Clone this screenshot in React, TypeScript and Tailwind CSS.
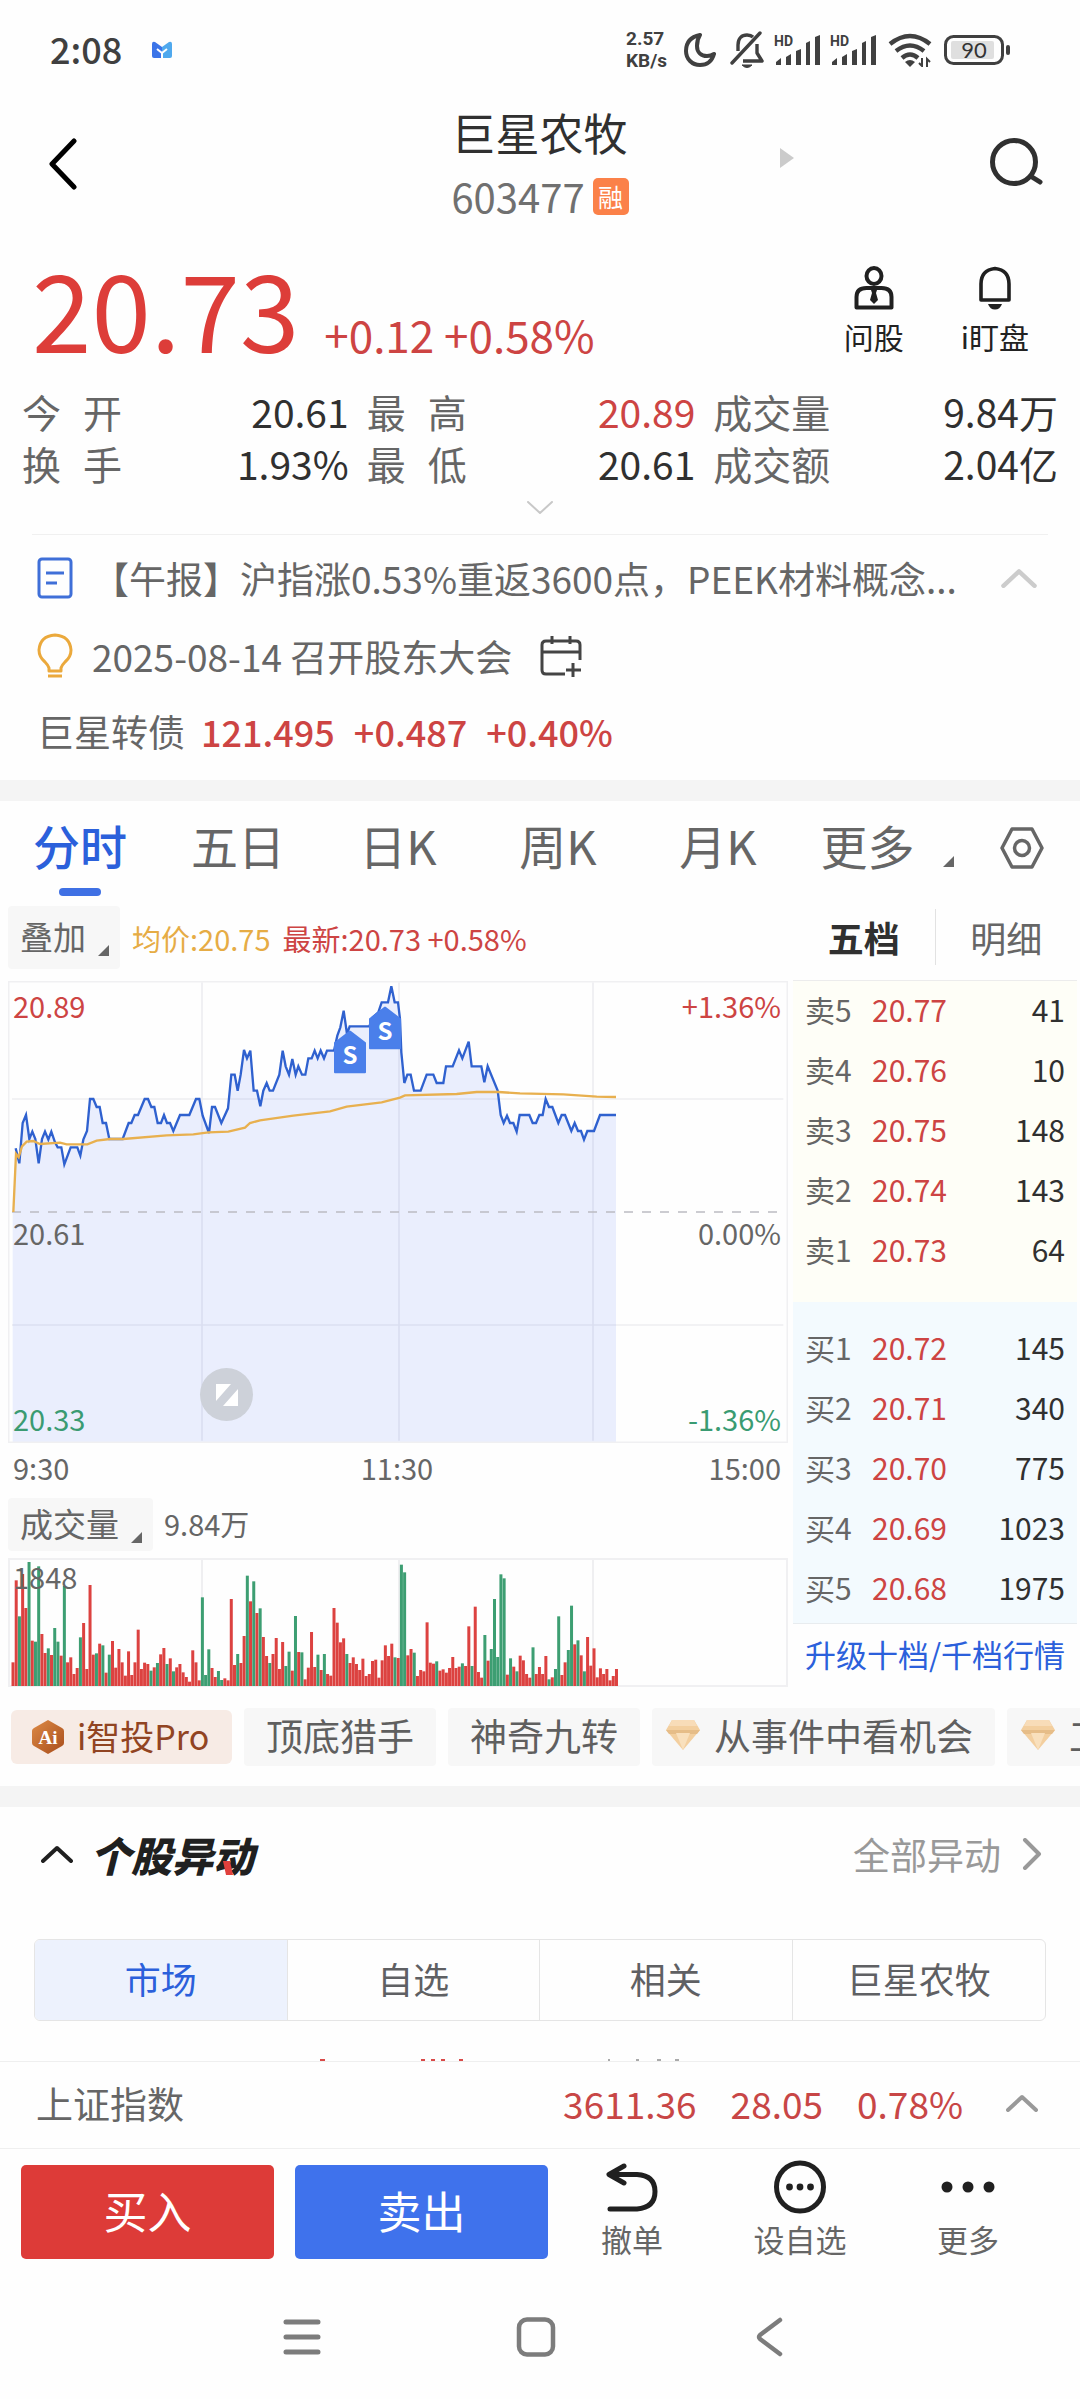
import type { ReactNode } from "react";

const PRICE_POINTS =
  "47,1108 58,1153 68,1032 78,1008 88,1080 97,1058 106,1080 116,1153 126,1080 135,1058 145,1082 154,1058 165,1090 173,1105 184,1105 193,1156 212,1105 232,1105 241,1130 250,1082 261,1056 270,960 280,960 290,984 299,984 308,1032 318,1032 328,1080 368,1080 386,1032 394,1032 404,1008 414,1008 434,960 444,960 454,984 463,984 473,1032 483,1032 492,1008 501,1032 510,1032 520,1056 540,1008 568,1008 588,960 598,960 608,1010 627,1062 636,984 645,984 664,1032 684,988 694,887 704,887 713,935 722,887 732,813 741,838 751,815 761,935 771,935 781,982 790,935 800,912 809,935 819,935 838,887 848,815 857,862 867,887 877,840 887,887 895,862 906,887 916,887 925,838 935,838 944,815 953,838 962,815 972,838 981,815 1002,815 1012,770 1021,745 1031,695 1041,765 1049,742 1108,742 1118,715 1135,700 1145,670 1164,670 1174,622 1184,670 1194,670 1200,720 1204,820 1213,912 1222,887 1232,887 1242,935 1262,935 1280,887 1300,887 1310,912 1330,912 1338,862 1358,862 1377,814 1387,838 1406,788 1415,862 1444,862 1453,910 1463,862 1493,935 1502,1008 1511,1032 1521,1010 1530,1032 1540,1032 1550,1058 1559,1008 1588,1008 1598,1032 1608,1032 1618,1008 1628,1008 1637,960 1647,984 1657,984 1675,1032 1685,1008 1695,1008 1714,1056 1724,1032 1734,1056 1743,1056 1752,1082 1762,1056 1782,1056 1800,1008 1848,1008";

const AVERAGE_POINTS =
  "40,1299 48,1125 56,1135 66,1102 80,1088 100,1086 120,1095 180,1091 200,1096 262,1096 290,1085 330,1080 370,1080 500,1069 580,1066 625,1060 685,1058 735,1046 750,1032 780,1024 880,1010 990,997 1040,983 1145,970 1200,956 1215,949 1370,945 1430,939 1495,939 1560,943 1690,946 1790,953 1848,954";

// One value per minute; negative values are minutes in which the price fell.
const VOLUMES = [
  71, 317, -209, 336, 234, -372, 136, -133, -359, 156, 99, -113, 93, -174, -133, 91, -300, 71, 86, 36, 54, -146, 189, 51, 303,
  94, -98, 127, -122, 40, -94, 135, 55, 111, 71, 31, 104, 33, 71, 169, 51, 70, 66, -46, 56, -69, 95, 114, -66, 83, -44, 56, 66,
  41, 27, 13, 107, 71, 17, -266, -33, -110, 54, 27, -45, -18, 23, 17, 261, 63, -96, 69, 150, -331, 254, -314, 219, -233, 147, 90,
  -69, 96, 144, 51, 132, -60, -103, 46, -210, 102, -101, 20, 55, 162, 57, -94, 48, -96, 36, 31, 234, 190, 131, 143, -96, 69, 86,
  66, 48, 82, 30, 36, 75, 79, 25, 77, 122, 90, 127, -86, 84, -364, -341, 92, 111, -100, 30, 48, 44, 191, 70, 67, -74, 46, 50, 40,
  54, 87, 54, 58, -68, 60, 179, -60, 238, 42, 25, -153, 76, -111, -261, -87, -335, -323, 34, -83, 58, -44, 91, 77, 36, 25, -116,
  36, 57, 36, 90, -20, 26, -51, -209, 33, 71, -108, -241, 125, -137, 92, -44, 147, 61, 113, 26, 53, 36, 51, 17, 30, 51,
];

const ASKS = [
  ["卖5", "20.77", "41"],
  ["卖4", "20.76", "10"],
  ["卖3", "20.75", "148"],
  ["卖2", "20.74", "143"],
  ["卖1", "20.73", "64"],
];
const BIDS = [
  ["买1", "20.72", "145"],
  ["买2", "20.71", "340"],
  ["买3", "20.70", "775"],
  ["买4", "20.69", "1023"],
  ["买5", "20.68", "1975"],
];

function Chevron({ dir, className, stroke = 2 }: { dir: "up" | "down" | "left" | "right"; className: string; stroke?: number }) {
  const shape = {
    up: { box: "0 0 32 18", d: "M2 16 16 3 30 16" },
    down: { box: "0 0 26 14", d: "M1 1 13 12 25 1" },
    left: { box: "0 0 30 52", d: "M26 3 4 26 26 49" },
    right: { box: "0 0 20 32", d: "M3 2 17 16 3 30" },
  }[dir];
  return (
    <svg viewBox={shape.box} className={className} fill="none" stroke="currentColor" strokeWidth={stroke} strokeLinecap="round" strokeLinejoin="round" aria-hidden="true">
      <path d={shape.d} />
    </svg>
  );
}

function Corner() {
  return (
    <svg viewBox="0 0 11 11" className="size-[11px]" aria-hidden="true">
      <path d="M11 0V11H0Z" fill="#666" />
    </svg>
  );
}

function Signal() {
  return (
    <svg viewBox="0 0 46 40" className="h-10 w-[46px]" aria-hidden="true">
      <text x="0" y="16" fontSize="14" fontWeight="700" fill="#404040" fontFamily="Roboto, sans-serif">HD</text>
      <g fill="#404040">
        <path d="M2 35v-3l5-4v7z" />
        <path d="M12 35v-8l5-3v11z" />
        <path d="M22 35V21l5-2v16z" />
        <path d="M32 35V13l4-2v24z" />
        <path d="M41 35V7l5-2v30z" />
      </g>
    </svg>
  );
}

function StatusBar() {
  return (
    <div className="flex h-[100px] items-center pr-[70px] pl-[50px] text-[#404040]">
      <span className="pb-1 text-[36px] leading-[44px] font-medium">2:08</span>
      <svg viewBox="0 0 20 18" className="ml-[30px] h-[18px] w-5" aria-hidden="true">
        <path d="M0 3Q0 0 3 1l7 5v11H2q-2 0-2-2z" fill="#3b74e8" />
        <path d="M20 3q0-3-3-2l-7 5v11h8q2 0 2-2z" fill="#4fa9ee" />
        <path d="m5 8 5 4 5-4M10 12v6" stroke="#fff" strokeWidth="2" fill="none" />
      </svg>
      <div className="ml-auto flex items-center">
        <div className="w-[50px] font-['Roboto',sans-serif] text-[19px] leading-[22px] font-bold whitespace-nowrap">
          <div>2.57</div>
          <div>KB/s</div>
        </div>
        <svg viewBox="0 0 32 34" className="ml-2 h-[34px] w-8" fill="none" stroke="#404040" strokeWidth="4" strokeLinejoin="round" aria-hidden="true">
          <path d="M16 2C6 4 2 10 2 18c0 8 6 14 14 14 7 0 12-4 14-11-3 2-5 2-7 2-6 0-10-4-10-10 0-4 1-8 3-11z" />
        </svg>
        <svg viewBox="0 0 34 38" className="ml-[14px] h-[38px] w-[34px]" fill="none" stroke="#404040" strokeWidth="3.4" strokeLinejoin="round" aria-hidden="true">
          <path d="M8 20V14C8 7 12 4 17 4c2 0 4 0 6 2M27 13v9l5 8H13" />
          <path d="M30 2 2 32" strokeLinecap="round" />
          <path d="M12 34h10q-5 5-10 0z" fill="#404040" strokeWidth="1" />
        </svg>
        <div className="ml-[10px]"><Signal /></div>
        <div className="ml-[10px]"><Signal /></div>
        <svg viewBox="0 0 44 34" className="ml-3 h-[34px] w-11" fill="none" stroke="#404040" strokeWidth="4.4" aria-hidden="true">
          <path d="M2 11q20-16 40 0M8 18q14-11 28 0M14 25q8-7 16 0" />
          <path d="m22 34-5-5q5-4 10 0z" fill="#404040" stroke="none" />
          <path d="M34 25v8l-3-3M39 34v-8l3 3" strokeWidth="2" />
        </svg>
        <svg viewBox="0 0 66 30" className="ml-3 h-[30px] w-[66px]" aria-hidden="true">
          <rect x="1.5" y="1.5" width="57" height="27" rx="8" fill="none" stroke="#404040" strokeWidth="3" />
          <rect x="7" y="6" width="43" height="18" rx="2" fill="#dfdfdf" />
          <rect x="62" y="10" width="4" height="10" rx="2" fill="#404040" />
          <text x="30" y="23" fontSize="22" textAnchor="middle" fill="#333" fontFamily="Lato, sans-serif">90</text>
        </svg>
      </div>
    </div>
  );
}

function Header() {
  return (
    <header className="grid h-[148px] grid-cols-[1fr_auto_1fr] items-center px-9 pb-6">
      <button aria-label="返回" className="mt-1 ml-3 justify-self-start text-black">
        <Chevron dir="left" className="h-[52px] w-[30px]" stroke={5} />
      </button>
      <div>
        <h1 className="text-[44px] leading-[60px] text-[#303030]">巨星农牧</h1>
        <div className="flex h-[60px] items-center gap-2 pt-2">
          <span className="text-[40px] leading-[52px] text-[#707070]">603477</span>
          <span className="flex h-[37px] w-9 items-center justify-center rounded-[5px] bg-[#fb8149] text-[25px] leading-[36px] text-white">融</span>
        </div>
      </div>
      <div className="flex items-center justify-between pl-[151px]">
        <svg viewBox="0 0 14 22" className="mb-2 h-[22px] w-[14px]" aria-hidden="true">
          <path d="M0 1 14 11 0 21Z" fill="#cbcbcb" />
        </svg>
        <button aria-label="搜索">
          <svg viewBox="0 0 54 50" className="h-[50px] w-[54px]" fill="none" stroke="#303030" strokeWidth="5" strokeLinecap="round" aria-hidden="true">
            <circle cx="24" cy="25" r="21.5" />
            <path d="m42 40 8 5" />
          </svg>
        </button>
      </div>
    </header>
  );
}

function PriceRow() {
  return (
    <section className="flex items-start justify-between pr-[51px] pl-8">
      <div className="flex items-baseline pt-1 text-[#dd3d39]">
        <strong className="text-[107px] leading-[110px] font-normal">20.73</strong>
        <span className="ml-[25px] text-[44px] leading-[60px] text-[#cd4443]">+0.12 +0.58%</span>
      </div>
      <div className="flex gap-[57px] pt-[18px]">
        <button className="flex flex-col items-center text-[30px] leading-[44px] text-[#222]">
          <svg viewBox="0 0 40 44" className="h-11 w-10" fill="none" stroke="#202020" strokeWidth="4" aria-hidden="true">
            <ellipse cx="20" cy="10" rx="7.5" ry="8" />
            <path d="M2.5 41.500V31q0-9 10-9h15q10 0 10 9v10.500z" strokeLinejoin="round" />
            <path d="M17 24h6l-1 3 2 7-4 4-4-4 2-7z" fill="#202020" stroke="none" />
          </svg>
          <span className="mt-1">问股</span>
        </button>
        <button className="flex flex-col items-center text-[30px] leading-[44px] text-[#222]">
          <svg viewBox="0 0 40 44" className="h-11 w-10" fill="none" stroke="#202020" strokeWidth="3.600" aria-hidden="true">
            <path d="M6 34V18q0-14 14-15.500Q34 4 34 18v16z" strokeLinejoin="round" />
            <path d="M13 38h14q-2 5.500-7 5.500T13 38z" fill="#202020" stroke="none" />
          </svg>
          <span className="mt-1">i盯盘</span>
        </button>
      </div>
    </section>
  );
}

function Stat({ label, value, tone = "text-[#303030]" }: { label: string; value: string; tone?: string }) {
  const spaced = label.length === 2;
  return (
    <div className="flex h-[52px] items-center justify-between">
      <dt className={spaced ? "flex gap-[22px] text-[#666]" : "text-[#666]"}>
        {spaced ? label.split("").map((c) => <span key={c}>{c}</span>) : label}
      </dt>
      <dd className={tone}>{value}</dd>
    </div>
  );
}

function Stats() {
  return (
    <section className="mx-[22px] mt-[21px]">
      <dl className="grid grid-cols-[327fr_329fr_345fr] gap-x-[18px] text-[39px] leading-[52px]">
        <Stat label="今开" value="20.61" />
        <Stat label="最高" value="20.89" tone="text-[#cd4443]" />
        <Stat label="成交量" value="9.84万" />
        <Stat label="换手" value="1.93%" />
        <Stat label="最低" value="20.61" />
        <Stat label="成交额" value="2.04亿" />
      </dl>
      <button aria-label="展开" className="flex h-[45px] w-full justify-center pt-3 text-[#c8c8c8]">
        <Chevron dir="down" className="h-[14px] w-[26px]" />
      </button>
    </section>
  );
}

function News() {
  return (
    <section className="mx-8 border-t border-[#f0f0f0] pt-1 pb-[14px] pl-[5px] text-[37px] leading-[50px] text-[#666]">
      <div className="flex h-[78px] items-center">
        <svg viewBox="0 0 36 42" className="h-[42px] w-9 shrink-0" fill="none" stroke="#3f6fd8" strokeWidth="3" aria-hidden="true">
          <rect x="2" y="2" width="32" height="38" rx="3" />
          <path d="M9 16h18M9 26h11" />
        </svg>
        <a href="#news" className="ml-[19px] whitespace-nowrap">【午报】沪指涨0.53%重返3600点，PEEK材料概念...</a>
        <button aria-label="收起" className="mr-[11px] ml-auto text-[#ccc]">
          <Chevron dir="up" className="h-5 w-9" stroke={4} />
        </button>
      </div>
      <div className="flex h-[78px] items-center">
        <svg viewBox="0 0 36 46" className="h-[46px] w-9 shrink-0" fill="none" stroke="#eba93c" strokeWidth="3" aria-hidden="true">
          <path d="M12 38v-3q-1-3-4-6-6-5-6-12Q3 3 18 2q15 1 16 15 0 7-6 12-3 3-4 6v3z" strokeLinejoin="round" />
          <path d="M11 43h14" />
        </svg>
        <a href="#event" className="ml-[19px]">2025-08-14 召开股东大会</a>
        <button aria-label="添加日程" className="ml-7">
          <svg viewBox="0 0 42 42" className="size-[42px]" fill="none" stroke="#444" strokeWidth="3" aria-hidden="true">
            <path d="M25 39H6q-4 0-4-4V10q0-4 4-4h30q4 0 4 4v15M2 17h38M12 1v8M30 1v8M33 28v14M26 35h15" />
          </svg>
        </button>
      </div>
      <div className="flex h-[71px] items-center gap-4">
        <span>巨星转债</span>
        <span className="flex gap-[19px] text-[36px] font-medium text-[#cd4443]">
          <span>121.495</span>
          <span>+0.487</span>
          <span>+0.40%</span>
        </span>
      </div>
    </section>
  );
}

function PeriodTabs() {
  return (
    <nav className="grid grid-cols-[repeat(6,4fr)_3fr] pt-1 pb-[10px] text-[47px] leading-[80px] text-[#666]">
      <button className="flex flex-col items-center font-medium text-[#2b60db]">
        分时
        <span className="mt-[3px] h-2 w-[42px] rounded-full bg-[#3f70e4]" />
      </button>
      {["五日", "日K", "周K", "月K"].map((t) => (
        <button key={t} className="h-20 pr-1">{t}</button>
      ))}
      <button className="flex h-20 items-end justify-center pl-[14px]">
        更多
        <span className="mb-[18px] ml-7"><Corner /></span>
      </button>
      <button aria-label="设置" className="flex h-[82px] items-center justify-center pt-1 pl-1">
        <svg viewBox="0 0 44 42" className="h-[42px] w-11" fill="none" stroke="#666" strokeWidth="3.500" strokeLinejoin="round" aria-hidden="true">
          <path d="M12 2h20l10 19-10 19H12L2 21z" />
          <circle cx="22" cy="21" r="7.500" />
        </svg>
      </button>
    </nav>
  );
}

function Marker({ x, y }: { x: number; y: number }) {
  return (
    <g>
      <path d={`M${x} ${y + 34}L${x + 45} ${y}L${x + 90} ${y + 34}V${y + 122}H${x}Z`} fill="#4a7fea" stroke="#4a7fea" strokeWidth="6" strokeLinejoin="round" />
      <text x={x + 45} y={y + 97} fontSize="72" fontWeight="700" fill="#fff" textAnchor="middle">S</text>
    </g>
  );
}

function PriceChart() {
  return (
    <div className="relative h-[462px] text-[29px] leading-[40px] text-[#666]">
      <svg viewBox="24 606 2340 1386" preserveAspectRatio="none" className="block size-full" fill="none" role="img" aria-label="分时走势">
        <path d="M606 610V1985M1197 610V1985M1779 610V1985M36 960H2350M36 1638H2350" stroke="#eeeef1" strokeWidth="5" />
        <polygon points={`38,1299 47,1108 ${PRICE_POINTS} 1848,1990 38,1990`} fill="#4d6ff5" fillOpacity="0.11" />
        <path d="M36 1299H2350" stroke="#bcbcc2" strokeWidth="5" strokeDasharray="27 27" />
        <rect x="26" y="608" width="2336" height="1382" stroke="#f0f0f2" strokeWidth="5" />
        <polyline points={PRICE_POINTS} stroke="#2f61cf" strokeWidth="7" />
        <polyline points={AVERAGE_POINTS} stroke="#e8b04f" strokeWidth="7" />
        <Marker x={1005} y={758} />
        <Marker x={1110} y={686} />
      </svg>
      <span className="absolute top-1 left-[5px] text-[#cd4443]">20.89</span>
      <span className="absolute top-1 right-[7px] text-[#cd4443]">+1.36%</span>
      <span className="absolute top-[231px] left-[5px]">20.61</span>
      <span className="absolute top-[231px] right-[7px]">0.00%</span>
      <span className="absolute bottom-[5px] left-[5px] text-[#3a9b72]">20.33</span>
      <span className="absolute right-[7px] bottom-[5px] text-[#3a9b72]">-1.36%</span>
      <button aria-label="全屏" className="absolute bottom-[22px] left-[192px] flex size-[53px] items-center justify-center rounded-full bg-[#cdd1d9]">
        <svg viewBox="0 0 22 22" className="size-[22px]" fill="#fff" aria-hidden="true">
          <path d="M0 0H15L0 17ZM22 5V22H7Z" />
        </svg>
      </button>
    </div>
  );
}

function VolumeChart() {
  return (
    <div className="relative h-[129px]">
      <svg viewBox="0 0 780 129" preserveAspectRatio="none" className="block size-full" role="img" aria-label="成交量">
        <path d="M194 1V128M391 1V128M585 1V128" stroke="#efeff1" strokeWidth="2" />
        <rect x="1" y="1" width="778" height="127" fill="none" stroke="#f0f0f2" strokeWidth="2" />
        {VOLUMES.map((v, i) => (
          <rect key={i} x={3.500 + i * 3.210} y={128 - Math.abs(v) / 3} width="3" height={Math.abs(v) / 3} fill={v < 0 ? "#3d9e72" : "#dc4240"} />
        ))}
      </svg>
      <span className="absolute top-0 left-[5px] text-[29px] leading-[36px] text-[#666]">1848</span>
    </div>
  );
}

function Rows({ rows }: { rows: string[][] }) {
  return (
    <>
      {rows.map(([name, price, qty]) => (
        <tr key={name} className="h-[60px]">
          <th scope="row" className="w-[79px] pb-1 pl-3 text-left font-normal text-[#666]">{name}</th>
          <td className="pb-1 text-[#cd4443]">{price}</td>
          <td className="pr-3 pb-1 text-right text-[#303030]">{qty}</td>
        </tr>
      ))}
    </>
  );
}

function OrderBook() {
  return (
    <aside>
      <div className="flex h-[75px] items-center border-b border-[#ececec] pb-3 text-[36px] leading-[50px]">
        <button className="flex-1 font-bold text-[#303030]">五档</button>
        <span className="h-[56px] w-px bg-[#e2e2e2]" />
        <button className="flex-1 text-[#666]">明细</button>
      </div>
      <div className="bg-[#fefef7] pb-[21px]">
        <table className="w-full text-[30px] leading-[40px]"><tbody><Rows rows={ASKS} /></tbody></table>
      </div>
      <div className="bg-[#f3fafe] pt-[17px] pb-1">
        <table className="w-full text-[30px] leading-[40px]"><tbody><Rows rows={BIDS} /></tbody></table>
      </div>
      <a href="#level2" className="flex h-[62px] items-center justify-center border-t border-[#e8ecef] pb-0.5 text-[31px] leading-[44px] whitespace-nowrap text-[#2b60db]">
        升级十档/千档行情
      </a>
    </aside>
  );
}

function Market() {
  return (
    <section className="grid grid-cols-[780fr_284fr] gap-[5px] pr-[3px] pl-2">
      <div>
        <div className="flex h-[75px] items-start">
          <button className="flex h-[63px] items-end rounded bg-[#f7f7f7] pr-[11px] pb-[13px] pl-3 text-[33px] leading-[40px] text-[#666]">
            叠加
            <span className="ml-3"><Corner /></span>
          </button>
          <div className="flex h-[63px] items-center gap-3 pl-3 text-[29px] leading-[40px]">
            <span className="text-[#e6ac45]">均价:20.75</span>
            <span className="text-[#cd4443]">最新:20.73 +0.58%</span>
          </div>
        </div>
        <PriceChart />
        <div className="grid h-[48px] grid-cols-3 pt-1 pr-[7px] pl-[5px] text-[29px] leading-[40px] text-[#666]">
          <span>9:30</span>
          <span className="text-center">11:30</span>
          <span className="text-right">15:00</span>
        </div>
        <div className="my-[7px] flex h-[53px] items-center">
          <button className="flex h-full items-end rounded bg-[#f7f7f7] pr-[11px] pb-2 pl-3 text-[33px] leading-[40px] text-[#666]">
            成交量
            <span className="ml-3"><Corner /></span>
          </button>
          <span className="ml-[11px] pb-1 text-[29px] leading-[40px] text-[#666]">9.84万</span>
        </div>
        <VolumeChart />
      </div>
      <OrderBook />
    </section>
  );
}

function Gem() {
  return (
    <svg viewBox="0 0 34 30" className="h-[30px] w-[34px] shrink-0" aria-hidden="true">
      <path d="M6 0h22l6 10-17 20L0 10z" fill="#f3cf9f" />
      <path d="M6 0h22l3 6H3z" fill="#f8dcb8" />
      <path d="M0 10h34l-3 4H3z" fill="#e6bd88" />
      <path d="M10 13h14l-7 17z" fill="#f9e0bd" />
    </svg>
  );
}

function Chip({ children }: { children: ReactNode }) {
  return (
    <button className="flex h-[58px] shrink-0 items-center rounded bg-[#f7f7f7] pb-1 text-[37px] leading-[50px] whitespace-nowrap text-[#5f5f5f]">
      {children}
    </button>
  );
}

function Chips() {
  return (
    <div className="flex items-center gap-3 overflow-hidden pt-[21px] pb-5 pl-[11px]">
      <button className="flex h-[54px] w-[221px] shrink-0 items-center rounded-md bg-[#f7ebe5] pl-5 text-[34px] leading-[50px] text-[#914422]">
        <svg viewBox="0 0 34 36" className="h-9 w-[34px]" aria-hidden="true">
          <defs>
            <linearGradient id="ai" x1="0" y1="0" x2="1" y2="1">
              <stop offset="0" stopColor="#dd8a45" />
              <stop offset="1" stopColor="#a84d1c" />
            </linearGradient>
          </defs>
          <path d="m17 1 14 8q2 1 2 3v12q0 2-2 3l-14 8-14-8q-2-1-2-3V12q0-2 2-3z" fill="url(#ai)" />
          <text x="17" y="25" fontSize="19" fontWeight="700" fill="#fff" textAnchor="middle" fontFamily="Liberation Serif, serif">Ai</text>
        </svg>
        <span className="ml-3 pb-0.5">i智投Pro</span>
      </button>
      <Chip><span className="px-[22px]">顶底猎手</span></Chip>
      <Chip><span className="px-[22px]">神奇九转</span></Chip>
      <Chip><span className="flex items-center gap-[14px] pr-[22px] pl-[14px]"><Gem />从事件中看机会</span></Chip>
      <Chip><span className="flex items-center gap-[14px] pr-[22px] pl-[14px]"><Gem />工</span></Chip>
    </div>
  );
}

function Movers() {
  return (
    <section>
      <div className="flex h-[98px] items-center justify-between pr-[38px] pb-1 pl-[41px]">
        <div className="flex items-center">
          <button aria-label="收起" className="text-[#202020]">
            <Chevron dir="up" className="h-[18px] w-8" stroke={4} />
          </button>
          <h2 className="relative ml-[17px] text-[41px] leading-[50px] font-black text-[#202020] italic">
            个股异动
            <svg viewBox="0 0 10 14" className="absolute right-[21px] bottom-[4px] h-[14px] w-[10px]" aria-hidden="true">
              <path d="M0 0h7l3 14H3z" fill="#e0403c" />
            </svg>
          </h2>
        </div>
        <a href="#movers" className="flex items-center gap-[21px] text-[37px] leading-[50px] text-[#999]">
          全部异动
          <Chevron dir="right" className="h-8 w-5" stroke={4} />
        </a>
      </div>
      <div className="mx-[34px] mt-[34px] grid h-[82px] grid-cols-4 divide-x divide-[#e5e5e5] overflow-hidden rounded-md border border-[#e5e5e5] text-[36px] leading-[50px] text-[#5f6063]">
        <button className="bg-[#edf2fd] pb-1 text-[#2b60db]">市场</button>
        <button className="pb-1">自选</button>
        <button className="pb-1">相关</button>
        <button className="pb-1">巨星农牧</button>
      </div>
      <svg viewBox="0 0 1080 40" preserveAspectRatio="none" className="block h-10 w-full" aria-hidden="true">
        <path d="M320 39h5M421 39h4M431 39h4M441 39h4M459 39h4" stroke="#d94a48" strokeWidth="2" />
        <path d="M608 39h2M636 39h3M657 39h4M675 39h4" stroke="#aaa" strokeWidth="2" />
      </svg>
    </section>
  );
}

function IndexBar() {
  return (
    <section className="flex h-[88px] items-center border-y border-[#efefef] pr-[42px] pb-1 pl-9 text-[37px] leading-[50px]">
      <span className="text-[#666]">上证指数</span>
      <div className="ml-auto flex gap-[34px] text-[#c84646]">
        <span>3611.36</span>
        <span>28.05</span>
        <span>0.78%</span>
      </div>
      <button aria-label="展开指数" className="ml-[43px] text-[#999]">
        <Chevron dir="up" className="h-[18px] w-8" stroke={4} />
      </button>
    </section>
  );
}

function Action({ label, children }: { label: string; children: ReactNode }) {
  return (
    <button className="flex flex-col items-center text-[31px] leading-[40px] text-[#666]">
      {children}
      <span className="mt-1">{label}</span>
    </button>
  );
}

function Actions() {
  return (
    <section className="flex pr-7 pb-4 pl-[21px]">
      <div className="grid flex-[527] grid-cols-2 gap-[21px] pt-4 text-[44px] leading-[60px] text-white">
        <button className="h-[94px] rounded-[5px] bg-[#dd3b38] pb-1">买入</button>
        <button className="h-[94px] rounded-[5px] bg-[#3f72ec] pb-1">卖出</button>
      </div>
      <div className="grid flex-[504] grid-cols-3 pt-[10px]">
        <Action label="撤单">
          <svg viewBox="0 0 54 56" className="h-14 w-[54px]" fill="none" stroke="#202020" strokeWidth="5" strokeLinecap="round" strokeLinejoin="round" aria-hidden="true">
            <path d="M19 7 4 15.500 19 24M5 15.500h27q18 1 18 17T32 50H5" />
          </svg>
        </Action>
        <Action label="设自选">
          <svg viewBox="0 0 54 56" className="h-14 w-[54px]" fill="none" stroke="#202020" strokeWidth="5" aria-hidden="true">
            <ellipse cx="27" cy="28" rx="23.500" ry="24" />
            <g fill="#202020" stroke="none">
              <circle cx="16.500" cy="28" r="3.400" />
              <circle cx="27" cy="28" r="3.400" />
              <circle cx="37.500" cy="28" r="3.400" />
            </g>
          </svg>
        </Action>
        <Action label="更多">
          <svg viewBox="0 0 54 56" className="h-14 w-[54px]" fill="#202020" aria-hidden="true">
            <circle cx="6" cy="28" r="5.500" />
            <circle cx="27" cy="28" r="5.500" />
            <circle cx="48" cy="28" r="5.500" />
          </svg>
        </Action>
      </div>
    </section>
  );
}

function SystemNav() {
  return (
    <nav className="flex h-[124px] items-center justify-center gap-[195px] pr-2">
      <button aria-label="最近任务">
        <svg viewBox="0 0 38 40" className="h-10 w-[38px]" stroke="#7c7c7c" strokeWidth="5" strokeLinecap="round" aria-hidden="true">
          <path d="M3 5h32M3 20h32M3 35h32" />
        </svg>
      </button>
      <button aria-label="主屏幕">
        <svg viewBox="0 0 40 40" className="size-10" fill="none" stroke="#7c7c7c" strokeWidth="4.500" aria-hidden="true">
          <rect x="3" y="2.500" width="34" height="35" rx="8" />
        </svg>
      </button>
      <button aria-label="返回上一页">
        <svg viewBox="0 0 38 40" className="h-10 w-[38px]" fill="none" stroke="#7c7c7c" strokeWidth="4.500" strokeLinecap="round" strokeLinejoin="round" aria-hidden="true">
          <path d="M29 3 9 18q-2 2 0 4l20 15" />
        </svg>
      </button>
    </nav>
  );
}

export default function App() {
  return (
    <main className="w-full overflow-hidden bg-[#fefefe] font-['Noto_Sans_CJK_SC',sans-serif]">
      <StatusBar />
      <Header />
      <PriceRow />
      <Stats />
      <News />
      <div className="h-[21px] bg-[#f4f4f4]" />
      <PeriodTabs />
      <Market />
      <Chips />
      <div className="h-[21px] bg-[#f4f4f4]" />
      <Movers />
      <IndexBar />
      <Actions />
      <SystemNav />
    </main>
  );
}
